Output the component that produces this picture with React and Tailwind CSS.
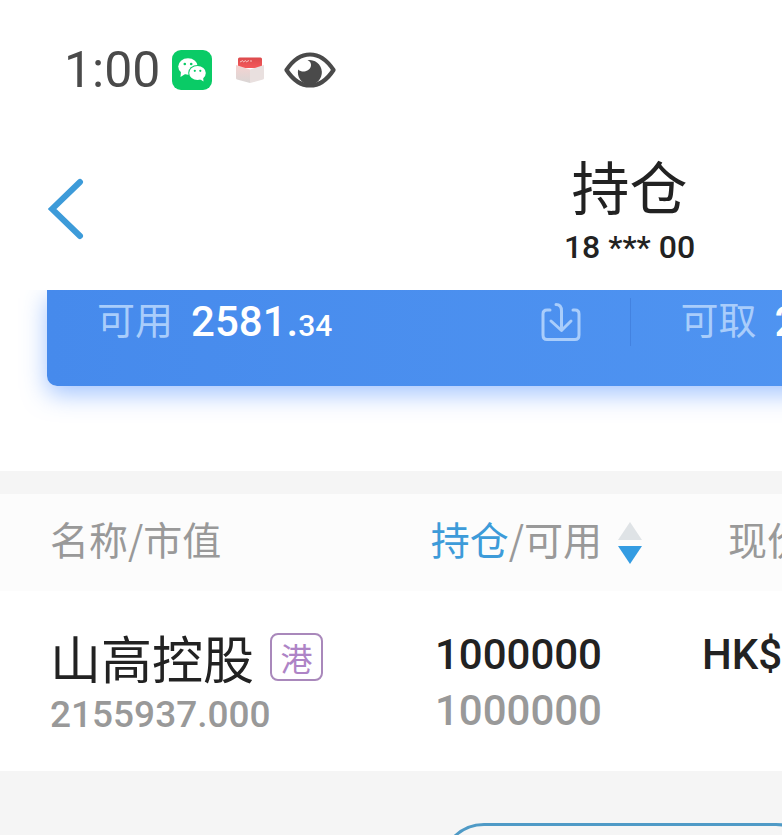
import React from 'react';

const EyeIcon = () => (
    <svg viewBox="0 0 52 36" className="w-[52px] h-9" aria-hidden="true">
        <path d="M2.5 18C9 8 16 2.500 26 2.500S43 8 49.500 18C43 28 36 33.500 26 33.500S9 28 2.500 18Z" fill="none" stroke="#4a4a4a" strokeWidth="4.200" strokeLinejoin="round" />
        <path d="M23.500 8.300A12 12.300 0 1 1 14.200 17.500C16 19.300 19 20 21.500 19.300C25 18.300 27.300 15.500 27 12.500C26.800 10.500 25.500 9 23.500 8.300Z" fill="#4a4a4a" />
    </svg>
);

const ChatIcon = () => (
    <svg viewBox="0 0 40 40" className="w-10 h-10" aria-hidden="true">
        <g fill="#fff">
            <ellipse cx="16" cy="16.500" rx="9.800" ry="8.200" />
            <path d="M9 21L8.500 27L14 23.500Z" />
        </g>
        <ellipse cx="25.500" cy="23" rx="9.300" ry="8" fill="#0acb66" />
        <g fill="#fff">
            <ellipse cx="25.500" cy="23" rx="8.300" ry="7" />
            <path d="M27 28.500L31.500 31.500L31 26Z" />
        </g>
        <g fill="#0acb66">
            <circle cx="12.800" cy="14" r="1.300" />
            <circle cx="19.200" cy="14" r="1.300" />
            <circle cx="22.800" cy="20.800" r="1.100" />
            <circle cx="28.300" cy="20.800" r="1.100" />
        </g>
    </svg>
);

const BoxIcon = () => (
    <svg viewBox="0 0 28 28" className="w-7 h-7" aria-hidden="true">
        <defs>
            <linearGradient id="flap" x1="0" y1="0" x2="0" y2="1">
                <stop offset="0" stopColor="#dc4a4c" />
                <stop offset="1" stopColor="#f4595b" />
            </linearGradient>
            <linearGradient id="side" x1="0" y1="0" x2="0" y2="1">
                <stop offset="0" stopColor="#f6d3d1" />
                <stop offset="1" stopColor="#d9d6d5" />
            </linearGradient>
        </defs>
        <path d="M2 3Q2 1.500 3.500 1.500H24.500Q26 1.500 26 3V12H2Z" fill="url(#flap)" />
        <path d="M0 9L14 13.500V27L1 23.500Q0 23 0 22Z" fill="url(#side)" />
        <path d="M28 9L14 13.500V27L27 23.500Q28 23 28 22Z" fill="#e9e0df" />
        <path d="M4 6L7 4.500M7 6L10 4.500M10 6L13 4.500M14 5H16" stroke="#f7c4c2" strokeWidth="1" fill="none" />
    </svg>
);

const DepositIcon = () => (
    <svg viewBox="0 0 40 40" className="w-10 h-10" fill="none" stroke="#a9cdfb" strokeWidth="3" strokeLinecap="round" strokeLinejoin="round" aria-hidden="true">
        <path d="M9 8H6Q2 8 2 12V33Q2 37.500 6 37.500H34Q38 37.500 38 33V12Q38 8 34 8H32" />
        <path d="M15 2.500Q20.500 2.500 20.500 9V28M10 19L20.500 28.500L30 19" />
    </svg>
);

const SortIcon = () => (
    <svg viewBox="0 0 24 42" className="w-6 h-[42px]" aria-hidden="true">
        <path d="M12 0L24 18H0Z" fill="#dfe3e6" />
        <path d="M0 24H24L12 42Z" fill="#349ce2" />
    </svg>
);

function StatusBar() {
    return (
        <div className="flex items-center h-[140px] pl-16 text-[#4a4a4a]">
            <span className="font-['Roboto'] text-[50px] leading-none w-[98px]">1:00</span>
            <span className="ml-2.5 rounded-[9px] bg-[#0acb66]"><ChatIcon /></span>
            <span className="ml-6"><BoxIcon /></span>
            <span className="ml-5"><EyeIcon /></span>
        </div>
    );
}

function TitleBar() {
    return (
        <header className="grid grid-cols-[1fr_auto_1fr] h-[150px] text-[#222]">
            <button type="button" aria-label="返回" className="justify-self-start self-start pl-12 pt-[38px]">
                <svg viewBox="0 0 36 62" className="w-9 h-[62px]" aria-hidden="true">
                    <path d="M32 4L4 31L32 58" fill="none" stroke="#3d9bd9" strokeWidth="6" strokeLinecap="round" />
                </svg>
            </button>
            <div className="text-center pt-4">
                <h1 className="text-[58px] leading-[58px]">持仓</h1>
                <p className="font-['Roboto'] font-medium text-[32px] leading-[38px] mt-3.5">18 *** 00</p>
            </div>
        </header>
    );
}

function BalanceCard() {
    return (
        <section className="h-[181px] overflow-hidden px-[47px]">
            <div className="grid grid-cols-2 h-24 rounded-b-[10px] bg-linear-to-r from-[#468aec] to-[#5499f4] shadow-[0_8px_24px_rgba(70,138,255,0.5)]">
                <div className="flex items-center h-16 pl-[50px] pr-12 border-r border-[#4382e0]/0">
                    <span className="text-[38px] leading-none text-[#a9cdfb] pb-2">可用</span>
                    <span className="font-['Roboto'] font-medium text-[42px] leading-none text-white ml-[18px]">
                        2581.<span className="text-[30px]">34</span>
                    </span>
                    <button type="button" aria-label="存入" className="ml-auto"><DepositIcon /></button>
                </div>
                <div className="flex items-center h-16">
                    <span className="w-px h-12 bg-[#4382e0]" />
                    <span className="text-[38px] leading-none text-[#a9cdfb] pb-2 ml-[50px]">可取</span>
                    <span className="font-['Roboto'] font-medium text-[42px] leading-none text-white ml-[18px]">2</span>
                </div>
            </div>
        </section>
    );
}

function Holdings() {
    return (
        <table className="w-full table-fixed">
            <colgroup>
                <col className="w-[350px]" />
                <col className="w-[292px]" />
                <col />
            </colgroup>
            <thead className="bg-[#fcfcfc] text-[39px] leading-none text-[#999]">
                <tr className="h-[97px]">
                    <th scope="col" className="font-normal text-left pl-[50px] pb-2">名称/市值</th>
                    <th scope="col" className="font-normal">
                        <button type="button" className="flex items-center gap-4 ml-auto">
                            <span className="pb-2"><span className="text-[#3d9bd9]">持仓</span>/可用</span>
                            <SortIcon />
                        </button>
                    </th>
                    <th scope="col" className="font-normal text-left pl-[86px] pb-2">现价</th>
                </tr>
            </thead>
            <tbody className="bg-white">
                <tr className="h-[180px] align-top">
                    <td className="pl-[50px] pt-9">
                        <div className="flex items-center gap-4">
                            <span className="text-[51px] leading-[60px] text-[#222]">山高控股</span>
                            <span className="flex items-center justify-center w-[53px] h-12 rounded-lg border-2 border-[#a988bb] text-[32px] leading-none text-[#ae84c6]">港</span>
                        </div>
                        <div className="font-['Roboto'] font-medium text-[37px] leading-[56px] text-[#999]">2155937.000</div>
                    </td>
                    <td className="font-['Roboto'] font-medium text-[42px] leading-[56px] text-right text-[#222] pt-9 pr-10">
                        <div>1000000</div>
                        <div className="text-[#999]">1000000</div>
                    </td>
                    <td className="font-['Roboto'] font-medium text-[42px] leading-[56px] text-[#222] pt-9 pl-[60px]">HK$</td>
                </tr>
            </tbody>
        </table>
    );
}

export default function App() {
    return (
        <div className="h-screen overflow-hidden bg-[#f5f5f5] font-['Noto_Sans_CJK_SC',sans-serif]">
            {/* content is wider than the viewport, the right part runs off screen */}
            <main className="w-[161%]">
                <div className="bg-white mb-[23px]">
                    <StatusBar />
                    <TitleBar />
                    <BalanceCard />
                </div>
                <Holdings />
                <div className="flex justify-center pt-[52px]">
                    <button type="button" aria-label="查看更多" className="w-[380px] h-[88px] rounded-full border-[3px] border-[#4f9ac6]" />
                </div>
            </main>
        </div>
    );
}
